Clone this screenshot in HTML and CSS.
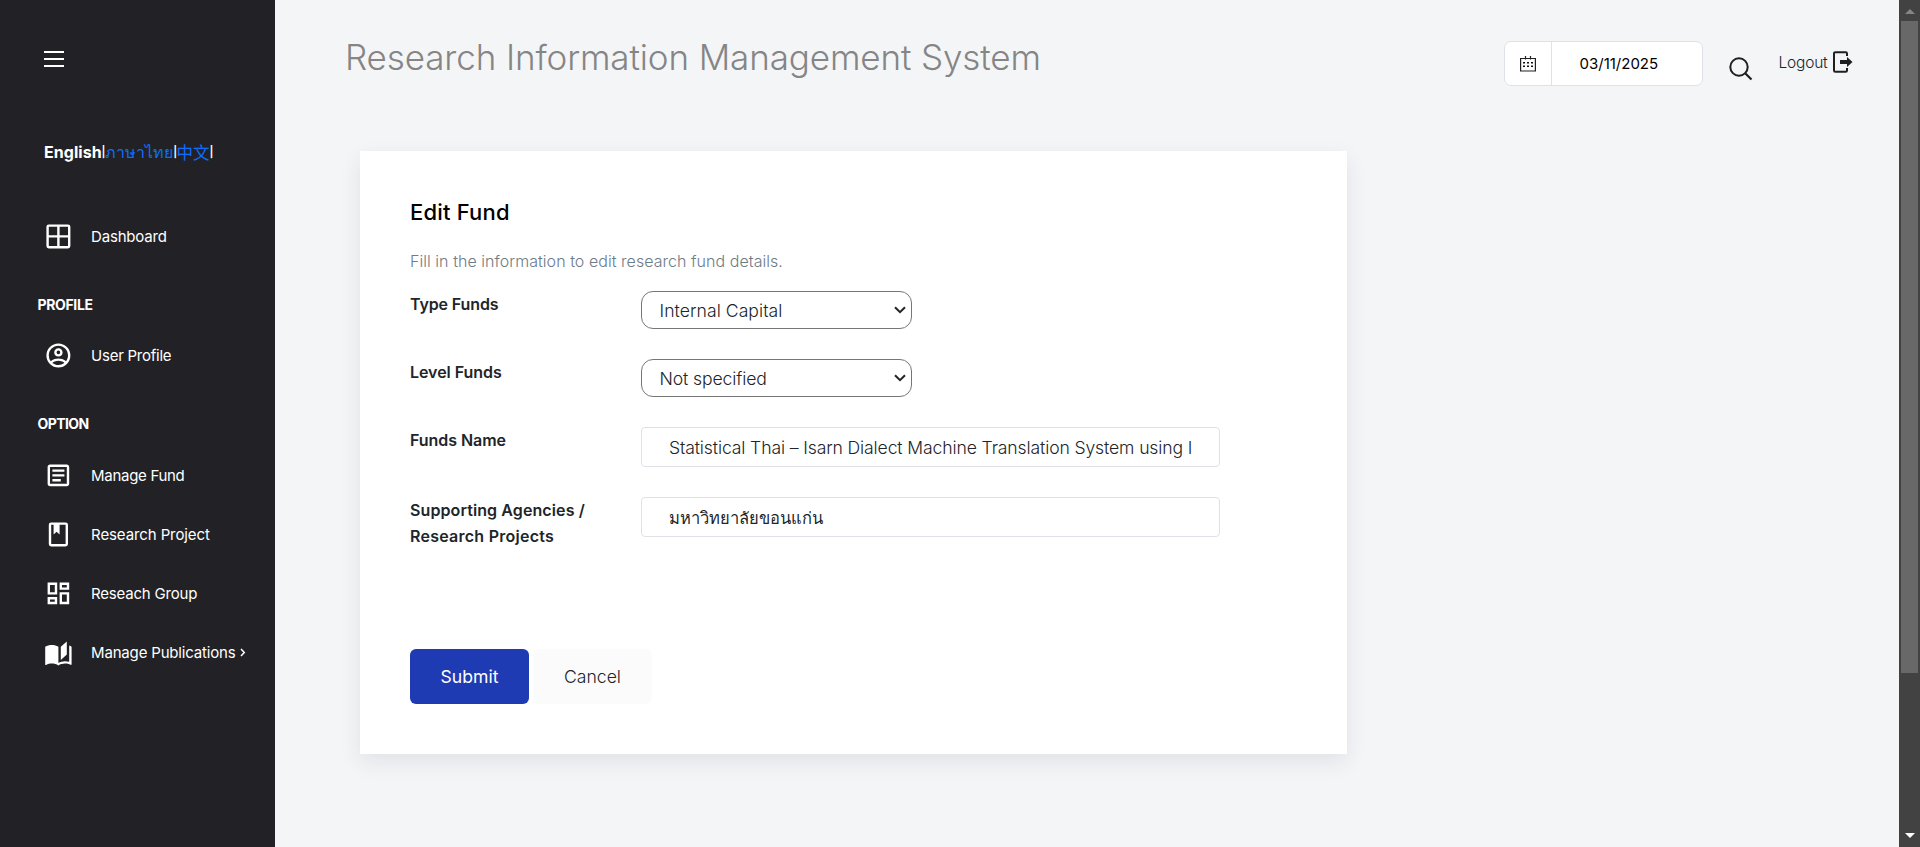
FILE: index.html
```html
<!DOCTYPE html>
<html lang="en">
<head>
<meta charset="utf-8">
<title>Research Information Management System</title>
<link rel="stylesheet" href="styles.css">
</head>
<body>
<div class="app">
  <nav class="sidebar">
    <button class="menu-toggle" aria-label="Menu"><svg width="20" height="18" viewBox="0 0 20 18"><path d="M0 2h20M0 9h20M0 16h20" stroke="#fff" stroke-width="2"/></svg></button>
    <div class="languages"><b class="lang-en">English</b><span class="bar">|</span><a class="lang-th">ภาษาไทย</a><span class="bar">|</span><a class="lang-zh">中文</a><span class="bar">|</span></div>
    <a class="nav-item"><svg class="nav-icon" viewBox="0 0 24 24"><path fill-rule="evenodd" d="M4 2h16a2 2 0 0 1 2 2v16a2 2 0 0 1-2 2H4a2 2 0 0 1-2-2V4a2 2 0 0 1 2-2M4 4v7h7V4zM13 4v7h7V4zM4 13v7h7v-7zM13 13v7h7v-7z"/></svg><span class="t-dash">Dashboard</span></a>
    <h6 class="nav-heading t-prof">PROFILE</h6>
    <a class="nav-item"><svg class="nav-icon" viewBox="0 0 24 24"><path d="M12 2A10 10 0 0 0 2 12a10 10 0 0 0 10 10 10 10 0 0 0 10-10A10 10 0 0 0 12 2M7.07 18.28c.43-.9 3.05-1.78 4.93-1.78s4.5.88 4.93 1.78A7.9 7.9 0 0 1 12 20c-1.86 0-3.57-.64-4.93-1.72m11.29-1.45c-1.43-1.74-4.9-2.33-6.36-2.33s-4.93.59-6.36 2.33A7.93 7.93 0 0 1 4 12c0-4.41 3.59-8 8-8s8 3.59 8 8c0 1.82-.62 3.5-1.64 4.83M12 6c-1.94 0-3.5 1.56-3.5 3.5S10.06 13 12 13s3.5-1.56 3.5-3.5S13.94 6 12 6m0 5a1.5 1.5 0 0 1-1.5-1.5A1.5 1.5 0 0 1 12 8a1.5 1.5 0 0 1 1.5 1.5A1.5 1.5 0 0 1 12 11"/></svg><span class="t-user">User Profile</span></a>
    <h6 class="nav-heading nav-heading-last t-opt">OPTION</h6>
    <a class="nav-item"><svg class="nav-icon" viewBox="0 0 24 24"><path d="M5 3c-1.11 0-2 .89-2 2v14c0 1.11.89 2 2 2h14c1.11 0 2-.89 2-2V5c0-1.11-.89-2-2-2zm0 2h14v14H5zm2 2v2h10V7zm0 4v2h10v-2zm0 4v2h7v-2z"/></svg><span class="t-fund">Manage Fund</span></a>
    <a class="nav-item"><svg class="nav-icon" viewBox="0 0 24 24"><path d="M18 2a2 2 0 0 1 2 2v16a2 2 0 0 1-2 2H6a2 2 0 0 1-2-2V4a2 2 0 0 1 2-2zm0 2h-5v8l-2.5-2.25L8 12V4H6v16h12z"/></svg><span class="t-proj">Research Project</span></a>
    <a class="nav-item"><svg class="nav-icon" viewBox="0 0 24 24"><path d="M19 5v2h-4V5zM9 5v6H5V5zm10 8v6h-4v-6zM9 17v2H5v-2zM21 3h-8v6h8zM11 3H3v10h8zm10 8h-8v10h8zm-10 4H3v6h8z"/></svg><span class="t-group">Reseach Group</span></a>
    <a class="nav-item"><svg class="nav-icon nav-icon-book" viewBox="0 0 24 24"><path d="m19 2-5 4.5v11l5-4.5zM6.5 5C4.55 5 2.45 5.4 1 6.5v14.66c0 .25.25.5.5.5.1 0 .15-.07.25-.07 1.35-.65 3.3-1.09 4.75-1.09 1.95 0 4.05.4 5.5 1.5 1.35-.85 3.8-1.5 5.5-1.5 1.65 0 3.35.31 4.75 1.06.1.05.15.03.25.03.25 0 .5-.25.5-.5V6.5c-.6-.45-1.25-.75-2-1V19c-1.1-.35-2.3-.5-3.5-.5-1.7 0-4.15.65-5.5 1.5V6.5C10.55 5.4 8.45 5 6.5 5"/></svg><span class="t-pub">Manage Publications</span><svg class="chev" width="6" height="9" viewBox="0 0 6 9"><path d="M1 1l3.3 3.5L1 8" fill="none" stroke="#fff" stroke-width="1.5"/></svg></a>
  </nav>

  <main class="content">
    <header class="topbar">
      <h1 class="title">Research Information Management System</h1>
      <div class="actions">
        <div class="date">
          <span class="date-icon"><svg width="16" height="16" viewBox="0 0 16 16"><path d="M.6 2.500h14.800v12.500H.6zM5.500 0v3.500M10.500 0v3.500" fill="none" stroke="#222" stroke-width="1.200"/><path d="M3 6h2v1.500H3zM7 6h2v1.500H7zM11 6h2v1.500h-2zM3 9.500h2V11H3zM7 9.500h2V11H7zM11 9.500h2V11h-2z" fill="#111"/></svg></span>
          <span class="date-value">03/11/2025</span>
        </div>
        <svg class="search" width="24" height="24" viewBox="0 0 24 24"><circle cx="10" cy="10" r="8.700" fill="none" stroke="#1f1f1f" stroke-width="2"/><path d="M16 16l6.500 6.500" stroke="#1f1f1f" stroke-width="2.200"/></svg>
        <a class="logout"><span class="t-logout">Logout</span><svg width="20" height="22" viewBox="0 0 20 22"><path d="M14 5V2.500A1.300 1.300 0 0 0 12.700 1.200H2.300A1.300 1.300 0 0 0 1 2.500v17a1.300 1.300 0 0 0 1.300 1.300h10.400A1.300 1.300 0 0 0 14 19.500V17" fill="none" stroke="#1f1f1f" stroke-width="2"/><path d="M7 9h7V6l5.500 5-5.500 5v-3H7z" fill="#1f1f1f"/></svg></a>
      </div>
    </header>

    <section class="card">
      <h4 class="card-title">Edit Fund</h4>
      <p class="card-desc">Fill in the information to edit research fund details.</p>
      <div class="row"><label class="label"><span class="t-type">Type Funds</span></label><div class="select"><span class="t-int">Internal Capital</span><svg class="caret" width="12" height="8" viewBox="0 0 12 8"><path d="M1 1.200l5 5 5-5" fill="none" stroke="#212529" stroke-width="2"/></svg></div></div>
      <div class="row"><label class="label"><span class="t-level">Level Funds</span></label><div class="select"><span class="t-not">Not specified</span><svg class="caret" width="12" height="8" viewBox="0 0 12 8"><path d="M1 1.200l5 5 5-5" fill="none" stroke="#212529" stroke-width="2"/></svg></div></div>
      <div class="row row-input"><label class="label"><span class="t-name">Funds Name</span></label><div class="input"><span class="t-stat">Statistical Thai – Isarn Dialect Machine Translation System using I</span></div></div>
      <div class="row row-input"><label class="label"><span class="t-supp">Supporting Agencies /</span><br><span class="t-res">Research Projects</span></label><div class="input"><span class="t-thai">มหาวิทยาลัยขอนแก่น</span></div></div>
      <div class="buttons"><button class="btn primary">Submit</button><button class="btn light">Cancel</button></div>
    </section>
  </main>

  <div class="scrollbar"><i class="arrow up"></i><i class="thumb"></i><i class="arrow down"></i></div>
</div>
</body>
</html>
```
FILE: styles.css
```css
* { box-sizing: border-box; }
body {
  margin: 0;
  height: 847px;
  overflow: hidden;
  background: #f4f5f7;
  color: #212529;
  font-family: Inter, "Noto Sans CJK SC", "Noto Sans", sans-serif;
}
button { font: inherit; border: 0; }
.app { display: flex; height: 847px; }

/* Sidebar */
.sidebar { width: 275px; background: #222226; color: #fff; flex: none; }
.menu-toggle { display: block; padding: 0; margin: 50px 0 0 44px; height: 18px; background: none; }
.menu-toggle svg { display: block; }
.languages { display: flex; align-items: center; height: 24px; margin: 72px 0 0 44px; font-size: 16px; }
.languages a { color: #0d6efd; }
.lang-en { font-weight: 700; letter-spacing: .05px; }
.lang-th { font-weight: 500; }
.lang-zh { font-size: 16.500px; margin-left: -.5px; }
.bar { width: 3.700px; font-size: 11px; line-height: 12px; font-weight: 600; display: flex; justify-content: center; }
.nav-item { display: flex; align-items: center; height: 59px; padding-left: 43.600px; font-size: 15px; color: #fff; }
.languages + .nav-item { margin-top: 43px; }
.nav-icon { width: 28.800px; height: 28.800px; margin-right: 18.700px; fill: #fff; flex: none; }
.nav-icon-book { margin-top: 2px; }
.chev { margin-left: 5px; }
.nav-heading { margin: 0; padding: 29px 0 0 37.500px; height: 60px; font-size: 14px; line-height: 20px; font-weight: 700; }
.nav-heading-last { height: 61px; }
.t-dash { letter-spacing: -.2px; }
.t-prof { letter-spacing: -.36px; }
.t-user { letter-spacing: -.25px; }
.t-opt { letter-spacing: -.6px; }
.t-fund { letter-spacing: -.3px; }
.t-proj { letter-spacing: -.1px; }
.t-group { letter-spacing: -.2px; }
.t-pub { letter-spacing: -.18px; }

/* Top bar */
.content { flex: 1; padding: 0 46px 0 70px; }
.topbar { display: flex; justify-content: space-between; height: 151px; }
.title { margin: 35px 0 0; font-size: 35px; line-height: 44px; font-weight: 300; letter-spacing: -.12px; color: #858585; white-space: nowrap; }
.actions { display: flex; align-items: flex-start; padding-top: 41px; }
.date { display: flex; width: 199px; height: 45px; border: 1px solid #dee2e6; border-radius: 7px; background: #fff; }
.date-icon { display: flex; width: 47px; align-items: center; justify-content: center; border-right: 1px solid #dee2e6; }
.date-value { display: flex; align-items: center; padding-left: 27.500px; font-size: 15px; font-weight: 400; color: #000; }
.search { margin: 16px 25.500px 0 26px; }
.logout { display: flex; align-items: center; height: 42px; gap: 6px; font-size: 15.500px; font-weight: 300; }
.t-logout { letter-spacing: -.2px; width: 48.500px; }

/* Form card */
.card { width: 987px; height: 603px; margin-left: 15px; padding: 48px 50px 0; background: #fff; box-shadow: 0 8px 20px rgba(33,46,66,.09); }
.card-title { margin: 0; font-size: 22px; line-height: 26px; font-weight: 500; letter-spacing: .18px; color: #000; }
.card-desc { margin: 22px 0 0; font-size: 16px; line-height: 28px; color: #6e7b87; font-weight: 300; letter-spacing: .045px; }
.row { display: flex; height: 68px; }
.card-desc + .row { margin-top: 16px; }
.row-input { height: 70px; }
.label { width: 231px; font-size: 16px; line-height: 26px; font-weight: 600; }
.select { display: flex; align-items: center; justify-content: space-between; width: 271px; height: 38px; padding: 0 5px 0 17.500px; border: 1px solid #767676; border-radius: 12px; font-size: 17.600px; font-weight: 300; }
.input { width: 579px; height: 40px; padding: 1px 20px 0 27px; border: 1px solid #dee2e6; border-radius: 4px; font-size: 17.600px; line-height: 38px; font-weight: 300; white-space: nowrap; }
.t-type { letter-spacing: -.12px; }
.t-level { letter-spacing: -.05px; }
.t-name { letter-spacing: -.05px; }
.t-supp { letter-spacing: .1px; }
.t-res { letter-spacing: .25px; }
.t-int { letter-spacing: .05px; }
.t-not { letter-spacing: -.12px; }
.t-stat { letter-spacing: -.13px; }
.t-thai { font-size: 16.500px; font-weight: 400; }
.buttons { display: flex; gap: 4px; margin-top: 82px; }
.btn { width: 119px; height: 55px; padding: 0; border-radius: 6px; font-size: 17.600px; font-weight: 400; }
.primary { background: #1f3bb3; color: #fff; }
.light { background: #fbfbfb; color: #212529; font-weight: 300; }

/* Page scrollbar */
.scrollbar { display: flex; flex-direction: column; align-items: center; width: 21px; height: 847px; background: #424242; flex: none; }
.arrow { width: 0; height: 0; border: 5px solid transparent; }
.up { border-top: 0; border-bottom-color: #858585; margin-top: 9px; }
.thumb { width: 17px; height: 652px; margin-top: 7px; background: #686868; }
.down { border-bottom: 0; border-top-color: #fff; margin-top: 160px; }
```
